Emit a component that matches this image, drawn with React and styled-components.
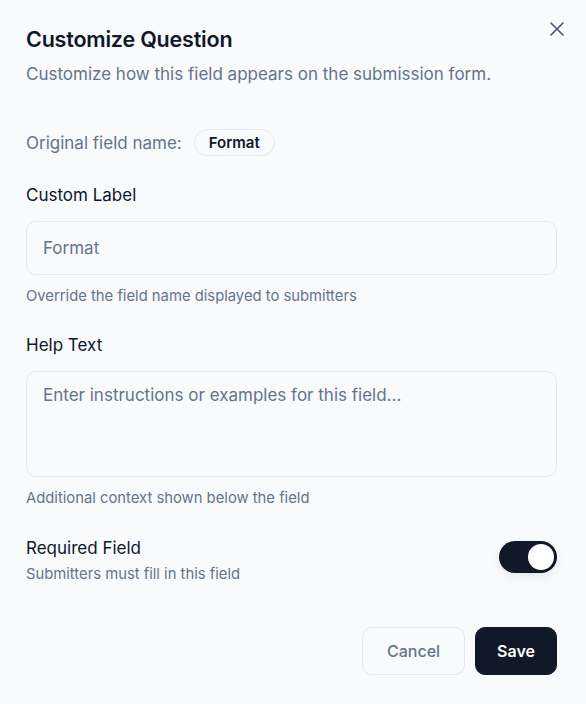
import React, { useState } from "react";
import styled, { createGlobalStyle } from "styled-components";

const GlobalStyle = createGlobalStyle`
  html, body {
    margin: 0;
    padding: 0;
    background: #f8fafc;
  }
  body {
    font-family: "Inter", "Noto Sans", sans-serif;
    color: #0f172a;
  }
`;

const App = () => {
  const [label, setLabel] = useState("");
  const [help, setHelp] = useState("");
  const [required, setRequired] = useState(true);

  return (
    <>
      <GlobalStyle />
      <Dialog>
        <CloseButton aria-label="Close">
          <svg width="14" height="14" viewBox="0 0 14 14" fill="none">
            <path d="M1 1L13 13M13 1L1 13" stroke="#475569" strokeWidth="1.6" strokeLinecap="round" />
          </svg>
        </CloseButton>

        <Header>
          <Title>Customize Question</Title>
          <Subtitle>Customize how this field appears on the submission form.</Subtitle>
        </Header>

        <OriginalRow>
          <MutedText>Original field name:</MutedText>
          <Badge>Format</Badge>
        </OriginalRow>

        <Field $top={27}>
          <Label>Custom Label</Label>
          <Input placeholder="Format" value={label} onChange={(e) => setLabel(e.target.value)} />
          <Hint>Override the field name displayed to submitters</Hint>
        </Field>

        <Field $top={27}>
          <Label>Help Text</Label>
          <TextArea
            placeholder="Enter instructions or examples for this field..."
            value={help}
            onChange={(e) => setHelp(e.target.value)}
          />
          <Hint>Additional context shown below the field</Hint>
        </Field>

        <SwitchRow>
          <div>
            <Label>Required Field</Label>
            <SwitchHint>Submitters must fill in this field</SwitchHint>
          </div>
          <Switch $on={required} onClick={() => setRequired(!required)}>
            <Knob $on={required} />
          </Switch>
        </SwitchRow>

        <Footer>
          <Button>Cancel</Button>
          <Button $primary>Save</Button>
        </Footer>
      </Dialog>
    </>
  );
};

const Dialog = styled.div`
  position: relative;
  box-sizing: border-box;
  width: 586px;
  height: 704px;
  padding: 25px 29px 29px 26px;
  display: flex;
  flex-direction: column;
`;

const CloseButton = styled.button`
  position: absolute;
  top: 21px;
  right: 21px;
  width: 16px;
  height: 16px;
  padding: 0;
  border: none;
  background: none;
  display: flex;
  align-items: center;
  justify-content: center;
  cursor: pointer;
`;

const Header = styled.div`
  display: flex;
  flex-direction: column;
  gap: 9px;
`;

const Title = styled.h2`
  margin: 0;
  font-size: 21.5px;
  font-weight: 600;
  line-height: 28px;
  letter-spacing: -0.2px;
  color: #0f172a;
`;

const Subtitle = styled.p`
  margin: 0;
  font-size: 17px;
  line-height: 24px;
  color: #64748b;
`;

const OriginalRow = styled.div`
  display: flex;
  align-items: center;
  gap: 12px;
  margin-top: 43px;
`;

const MutedText = styled.span`
  font-size: 17px;
  color: #64748b;
`;

const Badge = styled.span`
  display: inline-flex;
  align-items: center;
  height: 27px;
  box-sizing: border-box;
  padding: 0 14px;
  border: 1px solid #e2e8f0;
  border-radius: 999px;
  font-size: 15px;
  font-weight: 600;
  color: #0f172a;
  background: #f8fafc;
`;

const Field = styled.div`
  display: flex;
  flex-direction: column;
  margin-top: ${(p) => p.$top}px;
`;

const Label = styled.div`
  font-size: 17px;
  line-height: 24px;
  font-weight: 400;
  color: #0f172a;
`;

const Input = styled.input`
  box-sizing: border-box;
  margin-top: 14px;
  height: 54px;
  width: 100%;
  padding: 0 16px;
  border: 1px solid #e2e8f0;
  border-radius: 10px;
  background: #f8fafc;
  font-family: inherit;
  font-size: 17px;
  color: #0f172a;
  outline: none;
  &::placeholder {
    color: #64748b;
  }
`;

const TextArea = styled.textarea`
  box-sizing: border-box;
  margin-top: 14px;
  height: 106px;
  width: 100%;
  padding: 12px 16px;
  border: 1px solid #e2e8f0;
  border-radius: 10px;
  background: #f8fafc;
  font-family: inherit;
  font-size: 17px;
  line-height: 22px;
  color: #0f172a;
  resize: none;
  outline: none;
  &::placeholder {
    color: #64748b;
  }
`;

const Hint = styled.div`
  margin-top: 11px;
  font-size: 14.8px;
  line-height: 20px;
  color: #64748b;
`;

const SwitchRow = styled.div`
  display: flex;
  align-items: flex-start;
  justify-content: space-between;
  margin-top: 28px;
`;

const SwitchHint = styled.div`
  margin-top: 4px;
  font-size: 14.8px;
  line-height: 20px;
  color: #64748b;
`;

const Switch = styled.button`
  margin-top: 5px;
  position: relative;
  width: 58px;
  height: 32px;
  padding: 0;
  border: none;
  border-radius: 999px;
  background: ${(p) => (p.$on ? "#111827" : "#cbd5e1")};
  box-shadow: 0 4px 10px rgba(15, 23, 42, 0.08);
  cursor: pointer;
`;

const Knob = styled.span`
  position: absolute;
  top: 3px;
  left: ${(p) => (p.$on ? "29px" : "3px")};
  width: 26px;
  height: 26px;
  border-radius: 50%;
  background: #ffffff;
`;

const Footer = styled.div`
  display: flex;
  justify-content: flex-end;
  gap: 10px;
  margin-top: auto;
`;

const Button = styled.button`
  height: 48px;
  padding: 0 ${(p) => (p.$primary ? "21px" : "24px")};
  border-radius: 10px;
  border: 1px solid ${(p) => (p.$primary ? "#111827" : "#e2e8f0")};
  background: ${(p) => (p.$primary ? "#111827" : "#f8fafc")};
  color: ${(p) => (p.$primary ? "#ffffff" : "#64748b")};
  font-family: inherit;
  font-size: 16px;
  font-weight: ${(p) => (p.$primary ? 600 : 500)};
  cursor: pointer;
`;

export default App;
